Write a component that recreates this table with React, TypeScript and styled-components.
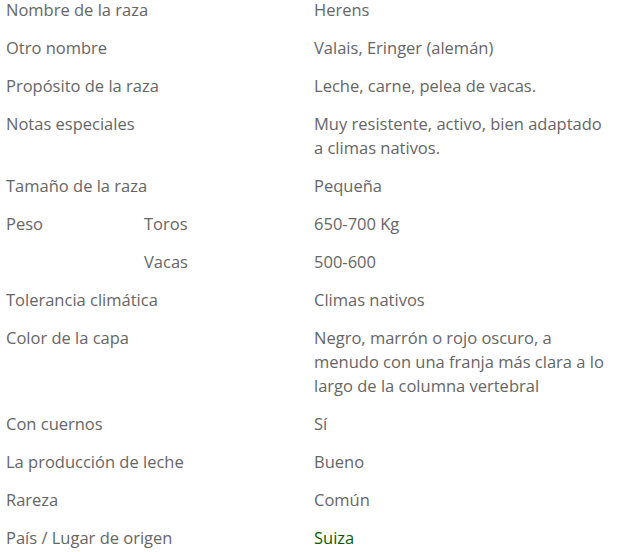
import React from 'react';
import styled, { createGlobalStyle } from 'styled-components';

const GlobalStyle = createGlobalStyle`
  body {
    margin: 0;
    background: #ffffff;
    font-family: 'Open Sans', 'Noto Sans', sans-serif;
  }
`;

const Table = styled.table`
  width: 621px;
  margin-top: -9px;
  border-collapse: collapse;
  table-layout: fixed;
  color: #666666;
  font-size: 16.5px;
  line-height: 24px;
`;

const Col = styled.col<{ $width?: number }>`
  width: ${({ $width }) => ($width ? `${$width}px` : 'auto')};
`;

const Cell = styled.td`
  padding: 7px 6px;
  vertical-align: top;
  text-align: left;
`;

const Label = styled(Cell)``;

const Sub = styled(Cell)``;

const Value = styled(Cell)`
  padding-right: 10px;
`;

const Link = styled.a`
  color: #0b5d00;
  text-decoration: none;
`;

interface Row {
  label: string;
  sub?: string;
  value: React.ReactNode;
}

const rows: Row[] = [
  { label: 'Nombre de la raza', value: 'Herens' },
  { label: 'Otro nombre', value: 'Valais, Eringer (alemán)' },
  { label: 'Propósito de la raza', value: 'Leche, carne, pelea de vacas.' },
  { label: 'Notas especiales', value: 'Muy resistente, activo, bien adaptado a climas nativos.' },
  { label: 'Tamaño de la raza', value: 'Pequeña' },
  { label: 'Peso', sub: 'Toros', value: '650-700 Kg' },
  { label: '', sub: 'Vacas', value: '500-600' },
  { label: 'Tolerancia climática', value: 'Climas nativos' },
  {
    label: 'Color de la capa',
    value: 'Negro, marrón o rojo oscuro, a menudo con una franja más clara a lo largo de la columna vertebral',
  },
  { label: 'Con cuernos', value: 'Sí' },
  { label: 'La producción de leche', value: 'Bueno' },
  { label: 'Rareza', value: 'Común' },
  { label: 'País / Lugar de origen', value: <Link href="#">Suiza</Link> },
];

const App = () => {
  return (
    <>
      <GlobalStyle />
      <Table>
        <colgroup>
          <Col $width={138} />
          <Col $width={170} />
          <Col />
        </colgroup>
        <tbody>
          {rows.map((row, i) => (
            <tr key={i}>
              {row.sub !== undefined ? (
                <>
                  <Label>{row.label}</Label>
                  <Sub>{row.sub}</Sub>
                </>
              ) : (
                <Label colSpan={2}>{row.label}</Label>
              )}
              <Value>{row.value}</Value>
            </tr>
          ))}
        </tbody>
      </Table>
    </>
  );
};

export default App;
